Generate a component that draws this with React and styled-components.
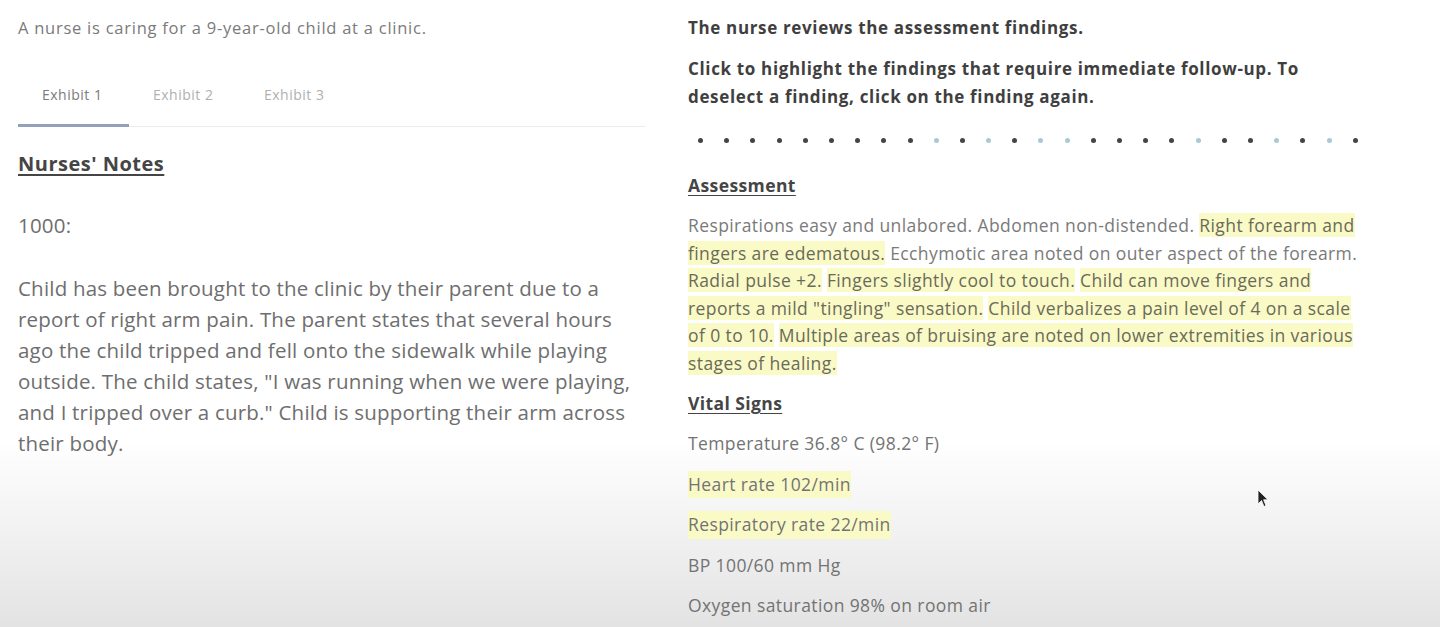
import React from 'react';
import styled, { createGlobalStyle } from 'styled-components';

const GlobalStyle = createGlobalStyle`
    html, body {
        margin: 0;
        padding: 0;
    }
    body {
        font-family: "Open Sans", "Liberation Sans", sans-serif;
        background: linear-gradient(to bottom, #ffffff 0px, #ffffff 440px, #e3e3e3 627px);
        min-height: 627px;
        overflow: hidden;
    }
`;

const Page = styled.div`
    position: relative;
    height: 627px;
    display: flex;
    gap: 43px;
    padding-left: 18px;
    box-sizing: border-box;
`;

const LeftPanel = styled.div`
    width: 627px;
    display: flex;
    flex-direction: column;
`;

const RightPanel = styled.div`
    width: 676px;
    display: flex;
    flex-direction: column;
`;

const Stem = styled.p`
    margin: 16px 0 0;
    font-size: 16.5px;
    letter-spacing: 0.75px;
    line-height: 24px;
    color: #7a7a7a;
`;

const TabBar = styled.div`
    display: flex;
    margin-top: 36px;
    border-bottom: 1px solid #ececec;
`;

const Tab = styled.div`
    width: 111px;
    box-sizing: border-box;
    padding: 9px 0 20px 24px;
    font-size: 14px;
    letter-spacing: 0.5px;
    color: ${p => (p.$active ? '#7b7b7b' : '#b0b0b0')};
    border-bottom: 3px solid ${p => (p.$active ? '#91a3ba' : 'transparent')};
    margin-bottom: -1px;
`;

const NotesTitle = styled.h3`
    margin: 23px 0 0;
    font-size: 20px;
    letter-spacing: 0.5px;
    line-height: 28px;
    font-weight: 700;
    color: #454545;
    text-decoration: underline;
    text-underline-offset: 3px;
`;

const SectionTitle = styled.h3`
    margin: ${p => p.$top || '0'} 0 0;
    font-size: 17.5px;
    letter-spacing: 0.4px;
    line-height: 24px;
    font-weight: 700;
    color: #454545;
    text-decoration: underline;
    text-underline-offset: 3px;
`;

const Note = styled.p`
    margin: ${p => p.$top || '0'} 0 0;
    font-size: 20.5px;
    letter-spacing: 0.2px;
    line-height: 31px;
    color: #6e6e6e;
`;

const Instruction = styled.p`
    margin: ${p => p.$top || '0'} 0 0;
    font-size: 17px;
    letter-spacing: 0.65px;
    line-height: 28px;
    font-weight: 700;
    color: #3f3f3f;
`;

const DotRow = styled.div`
    display: flex;
    justify-content: space-between;
    width: 660px;
    margin: 27px 0 0 10px;
`;

const Dot = styled.span`
    width: 5px;
    height: 5px;
    border-radius: 50%;
    background: ${p => (p.$light ? '#a9c8d8' : '#444')};
`;

const Findings = styled.p`
    margin: 15px 0 0;
    font-size: 17.5px;
    letter-spacing: 0.4px;
    line-height: 27.5px;
    color: #7a7a7a;
`;

const Mark = styled.span`
    background: #fafac6;
    color: #6a6a5a;
`;

const VitalList = styled.div`
    display: flex;
    flex-direction: column;
    gap: 13px;
    margin-top: 15px;
    align-items: flex-start;
`;

const Vital = styled.span`
    font-size: 17.5px;
    letter-spacing: 0.4px;
    line-height: 27.5px;
    color: #737373;
    background: ${p => (p.$marked ? '#fafac6' : 'transparent')};
`;

const Pointer = styled.svg`
    position: absolute;
    left: 1257px;
    top: 489px;
`;

const lightDots = [9, 11, 13, 14, 19, 22, 24];

export default function App() {
    return (
        <>
            <GlobalStyle />
            <Page>
                <LeftPanel>
                    <Stem>A nurse is caring for a 9-year-old child at a clinic.</Stem>
                    <TabBar>
                        <Tab $active>Exhibit 1</Tab>
                        <Tab>Exhibit 2</Tab>
                        <Tab>Exhibit 3</Tab>
                    </TabBar>
                    <NotesTitle>Nurses' Notes</NotesTitle>
                    <Note $top="32px">1000:</Note>
                    <Note $top="32px">
                        Child has been brought to the clinic by their parent due to a report of right arm pain.
                        The parent states that several hours ago the child tripped and fell onto the sidewalk
                        while playing outside. The child states, "I was running when we were playing, and I
                        tripped over a curb." Child is supporting their arm across their body.
                    </Note>
                </LeftPanel>
                <RightPanel>
                    <Instruction $top="14px">The nurse reviews the assessment findings.</Instruction>
                    <Instruction $top="13px">
                        Click to highlight the findings that require immediate follow-up. To deselect a
                        finding, click on the finding again.
                    </Instruction>
                    <DotRow>
                        {Array.from({ length: 26 }).map((_, i) => (
                            <Dot key={i} $light={lightDots.includes(i)} />
                        ))}
                    </DotRow>
                    <SectionTitle $top="30px">Assessment</SectionTitle>
                    <Findings>
                        Respirations easy and unlabored. Abdomen non-distended.{' '}
                        <Mark>Right forearm and fingers are edematous.</Mark>{' '}
                        Ecchymotic area noted on outer aspect of the forearm.{' '}
                        <Mark>Radial pulse +2.</Mark> <Mark>Fingers slightly cool to touch.</Mark>{' '}
                        <Mark>Child can move fingers and reports a mild "tingling" sensation.</Mark>{' '}
                        <Mark>Child verbalizes a pain level of 4 on a scale of 0 to 10.</Mark>{' '}
                        <Mark>Multiple areas of bruising are noted on lower extremities in various stages of healing.</Mark>
                    </Findings>
                    <SectionTitle $top="14px">Vital Signs</SectionTitle>
                    <VitalList>
                        <Vital>Temperature 36.8° C (98.2° F)</Vital>
                        <Vital $marked>Heart rate 102/min</Vital>
                        <Vital $marked>Respiratory rate 22/min</Vital>
                        <Vital>BP 100/60 mm Hg</Vital>
                        <Vital>Oxygen saturation 98% on room air</Vital>
                    </VitalList>
                </RightPanel>
                <Pointer width="12" height="20" viewBox="0 0 12 20">
                    <path d="M1 1 L1 15 L4.5 11.5 L7 17.5 L9 16.6 L6.6 10.8 L11 10.8 Z" fill="#222" stroke="#fff" strokeWidth="0.8" />
                </Pointer>
            </Page>
        </>
    );
}
